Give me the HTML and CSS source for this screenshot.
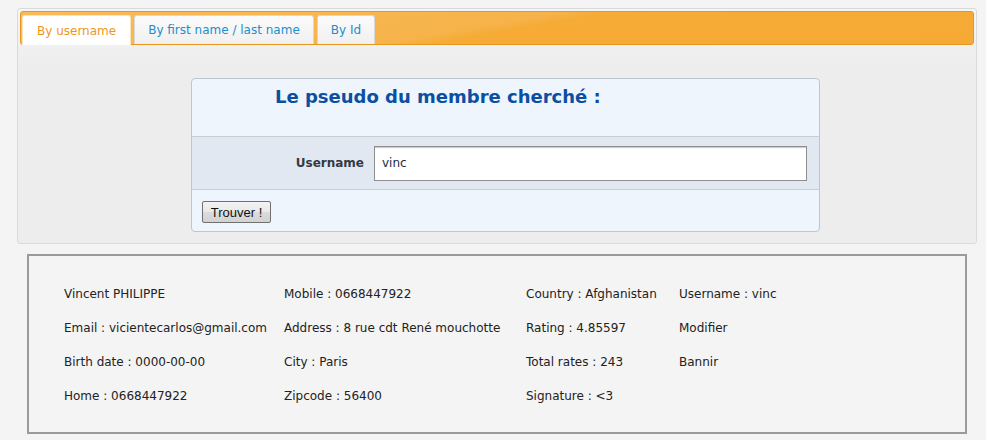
FILE: index.html
```html
<!DOCTYPE html>
<html>
<head>
<meta charset="utf-8">
<link rel="stylesheet" href="styles.css">
</head>
<body>
<div class="page">
  <div class="panel">
    <div class="tabbar">
      <a class="tab active">By username</a>
      <a class="tab">By first name / last name</a>
      <a class="tab">By Id</a>
    </div>
    <div class="panel-body">
      <form class="searchbox">
        <div class="sb-head">Le pseudo du membre cherché :</div>
        <div class="sb-row">
          <label class="sb-label">Username</label>
          <input class="sb-input" type="text" value="vinc">
        </div>
        <div class="sb-foot">
          <button type="button" class="btn">Trouver !</button>
        </div>
      </form>
    </div>
  </div>
  <div class="result">
    <div class="grid">
      <div>Vincent PHILIPPE</div>
      <div>Mobile : 0668447922</div>
      <div>Country : Afghanistan</div>
      <div>Username : vinc</div>
      <div>Email : vicientecarlos@gmail.com</div>
      <div>Address : 8 rue cdt René mouchotte</div>
      <div>Rating : 4.85597</div>
      <div>Modifier</div>
      <div>Birth date : 0000-00-00</div>
      <div>City : Paris</div>
      <div>Total rates : 243</div>
      <div>Bannir</div>
      <div>Home : 0668447922</div>
      <div>Zipcode : 56400</div>
      <div>Signature : &lt;3</div>
      <div></div>
    </div>
  </div>
</div>
</body>
</html>
```

FILE: styles.css
```css
html, body {
  margin: 0;
  padding: 0;
  background: #f4f4f4;
  font-family: "DejaVu Sans", Verdana, sans-serif;
}
.page {
  padding: 8px 9px 0 17px;
}
.panel {
  border: 1px solid #dadada;
  border-radius: 3px;
  background: linear-gradient(#f5f5f5, #ededed 60px, #ededed);
  padding: 2px 2px 11px 2px;
}
.tabbar {
  display: flex;
  align-items: flex-end;
  gap: 3px;
  height: 32px;
  padding: 0 1px;
  border: 1px solid #e8961c;
  border-radius: 3px;
  background: linear-gradient(170deg, #f8bb58 0%, #f6b34a 48%, #f5ab36 52%, #f4aa34 100%);
}
.tab {
  display: flex;
  align-items: center;
  height: 28px;
  padding: 0 13px;
  font-size: 12px;
  color: #1b8fcb;
  background: linear-gradient(#fbfbfb, #f0f0f0);
  border: 1px solid #d8d8d8;
  border-bottom: none;
  border-radius: 3px 3px 0 0;
  cursor: pointer;
}
.tab.active {
  color: #f0961b;
  background: #ffffff;
  border-color: #fbe4bd;
  padding: 0 14px;
  height: 29px;
  margin-bottom: -1px;
}
.panel-body {
  padding-top: 33px;
}
.searchbox {
  width: 627px;
  margin: 0 0 0 171px;
  border: 1px solid #bcc6d2;
  border-radius: 4px;
  background: #eef5fd;
}
.sb-head {
  height: 58px;
  padding-left: 83px;
  box-sizing: border-box;
  padding-top: 7px;
  font-size: 18px;
  font-weight: bold;
  color: #0b4fa3;
  border-bottom: 1px solid #c5cdd8;
}
.sb-row {
  display: flex;
  align-items: center;
  height: 52px;
  background: #e1e8f1;
  border-bottom: 1px solid #c5cdd8;
}
.sb-label {
  width: 172px;
  text-align: right;
  font-size: 12px;
  font-weight: bold;
  color: #333a44;
  padding-right: 10px;
}
.sb-input {
  width: 433px;
  height: 35px;
  box-sizing: border-box;
  border: 1px solid #8e8e8e;
  box-shadow: inset 0 2px 1px -1px #c8c8c8;
  padding: 0 7px;
  font-family: "DejaVu Sans", Verdana, sans-serif;
  font-size: 12px;
  color: #1d2a44;
  background: #fff;
  outline: none;
}
.sb-foot {
  height: 41px;
  padding: 11px 0 0 10px;
  box-sizing: border-box;
}
.btn {
  height: 22px;
  width: 69px;
  padding: 0;
  font-family: "Liberation Sans", Arial, sans-serif;
  font-size: 13px;
  color: #111;
  border: 1px solid #707070;
  border-radius: 2px;
  background: linear-gradient(#f3f3f3, #e9e9e9 50%, #dcdcdc 51%, #d2d2d2);
}
.result {
  margin: 10px 0 6px 10px;
  width: 936px;
  height: 176px;
  border: 2px solid #9a9a9a;
  background: #f4f4f4;
  box-sizing: content-box;
  padding: 0;
}
.grid {
  display: grid;
  grid-template-columns: 220px 242px 153px auto;
  grid-auto-rows: 34px;
  padding: 21px 0 0 35px;
  font-size: 12px;
  color: #222;
  align-items: center;
}
```
